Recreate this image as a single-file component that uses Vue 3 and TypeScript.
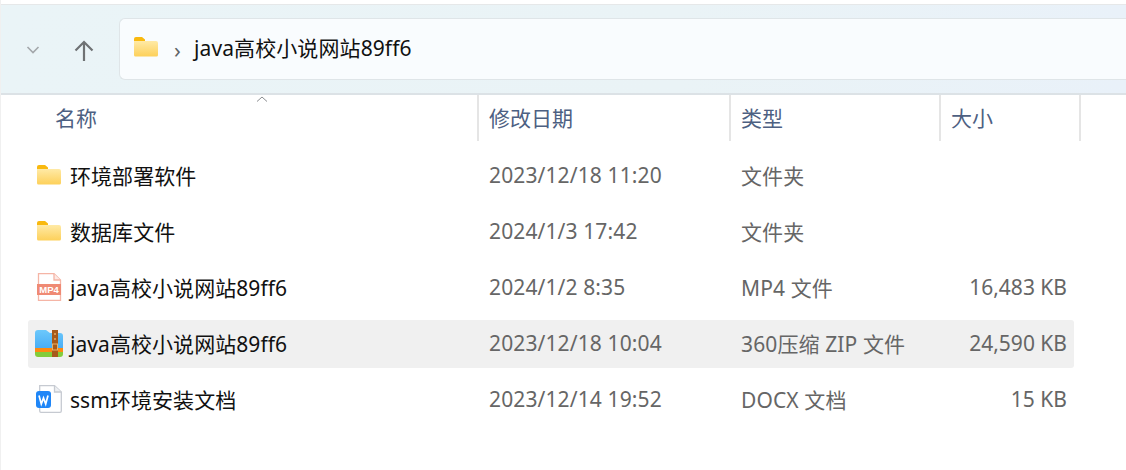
<script setup lang="ts">
interface FileRow {
  name: string;
  date: string;
  type: string;
  size: string;
  icon: 'folder' | 'mp4' | 'zip' | 'docx';
  active?: boolean;
}

const columns = [
  { label: '名称', cls: 'col-name' },
  { label: '修改日期', cls: 'col-date' },
  { label: '类型', cls: 'col-type' },
  { label: '大小', cls: 'col-size' },
];

const rows: FileRow[] = [
  { name: '环境部署软件', date: '2023/12/18 11:20', type: '文件夹', size: '', icon: 'folder' },
  { name: '数据库文件', date: '2024/1/3 17:42', type: '文件夹', size: '', icon: 'folder' },
  { name: 'java高校小说网站89ff6', date: '2024/1/2 8:35', type: 'MP4 文件', size: '16,483 KB', icon: 'mp4' },
  { name: 'java高校小说网站89ff6', date: '2023/12/18 10:04', type: '360压缩 ZIP 文件', size: '24,590 KB', icon: 'zip', active: true },
  { name: 'ssm环境安装文档', date: '2023/12/14 19:52', type: 'DOCX 文档', size: '15 KB', icon: 'docx' },
];
</script>

<template>
  <div class="window">
    <div class="toolbar">
      <svg class="chevron" width="14" height="10" viewBox="0 0 14 10">
        <path d="M1.5 2 L7 7.5 L12.5 2" fill="none" stroke="#a3a7aa" stroke-width="1.6" />
      </svg>
      <svg class="up" width="22" height="24" viewBox="0 0 22 24">
        <path d="M11 22 V3 M2.5 11.5 L11 3 L19.5 11.5" fill="none" stroke="#6f7274" stroke-width="2.2" />
      </svg>
      <div class="address">
        <svg class="addr-folder" width="26" height="22" viewBox="0 0 26 22">
          <defs>
            <linearGradient id="folder-fill" x1="0" y1="0" x2="0" y2="1">
              <stop offset="0" stop-color="#ffeaa6" />
              <stop offset="1" stop-color="#fdd05a" />
            </linearGradient>
            <linearGradient id="zip-fill" x1="0" y1="0" x2="0" y2="1">
              <stop offset="0" stop-color="#6cc8fb" />
              <stop offset="1" stop-color="#4aaef5" />
            </linearGradient>
          </defs>
          <path d="M1 3 a2 2 0 0 1 2-2 h6 l3 2.500 v3 H1 z" fill="#f9b90f" />
          <path d="M1 5 H23 a2 2 0 0 1 2 2 V19 a1.500 1.500 0 0 1-1.500 1.500 H2.500 A1.500 1.500 0 0 1 1 19 z" fill="url(#folder-fill)" />
        </svg>
        <span class="crumb-sep">›</span>
        <span class="crumb">java高校小说网站89ff6</span>
      </div>
    </div>

    <div class="header">
      <svg class="sort" width="12" height="6" viewBox="0 0 12 6">
        <path d="M1 5.500 L6 1 L11 5.500" fill="none" stroke="#8a8d90" stroke-width="1" />
      </svg>
      <div v-for="c in columns" :key="c.label" class="head-cell" :class="c.cls">{{ c.label }}</div>
    </div>

    <div class="list">
      <div v-for="r in rows" :key="r.date" class="row" :class="{ active: r.active }">
        <div class="cell-name">
          <span class="icon">
            <svg v-if="r.icon === 'folder'" width="26" height="22" viewBox="0 0 26 22">
              <path d="M1 3 a2 2 0 0 1 2-2 h6 l3 2.500 v3 H1 z" fill="#f9b90f" />
              <path d="M1 5 H23 a2 2 0 0 1 2 2 V19 a1.500 1.500 0 0 1-1.500 1.500 H2.500 A1.500 1.500 0 0 1 1 19 z" fill="url(#folder-fill)" />
            </svg>
            <svg v-else-if="r.icon === 'mp4'" width="26" height="30" viewBox="0 0 26 30">
              <path d="M2.500 1.700 H18 L24.500 8 V28.300 H2.500 z" fill="#fff" stroke="#f5b5a6" stroke-width="1.300" />
              <path d="M18 1.700 V8 H24.500" fill="#fde9e4" stroke="#f5b5a6" stroke-width="1.300" />
              <rect x="1" y="12" width="24" height="11" fill="#ef8a74" />
              <text x="13" y="21" text-anchor="middle" class="mp4-label">MP4</text>
            </svg>
            <svg v-else-if="r.icon === 'zip'" width="28" height="27" viewBox="0 0 28 27">
              <path d="M0 3 a3 3 0 0 1 3-3 h8 l4 3 h10 a3 3 0 0 1 3 3 V18 H0 z" fill="url(#zip-fill)" />
              <rect x="0" y="18" width="28" height="4" fill="#ff8a10" />
              <path d="M0 22 H28 V24 a3 3 0 0 1-3 3 H3 a3 3 0 0 1-3-3 z" fill="#84cc3a" />
              <rect x="17" y="0" width="6" height="27" fill="#a85a1a" />
              <rect x="19.300" y="3" width="1.400" height="2" fill="#e8b26b" />
              <rect x="19.300" y="8" width="1.400" height="2" fill="#e8b26b" />
              <rect x="17.500" y="14" width="5" height="6" fill="none" stroke="#e8b26b" stroke-width="1" />
            </svg>
            <svg v-else width="26" height="28" viewBox="0 0 26 28">
              <path d="M3.700 .7 H18.500 L25.300 7 V26 a1.300 1.300 0 0 1-1.300 1.300 H5 A1.300 1.300 0 0 1 3.700 26 z" fill="#fff" stroke="#c6cad1" stroke-width="1.300" />
              <path d="M18.500 .7 V7 H25.300" fill="#eef0f3" stroke="#c6cad1" stroke-width="1.300" />
              <rect x="0" y="6" width="15" height="17" rx="3" fill="#1f86f7" />
              <path d="M3 10.500 L5.300 19 L7.500 13 L9.700 19 L12 10.500" fill="none" stroke="#fff" stroke-width="1.700" />
            </svg>
          </span>
          <span class="name">{{ r.name }}</span>
        </div>
        <div class="cell-date">{{ r.date }}</div>
        <div class="cell-type">{{ r.type }}</div>
        <div class="cell-size">{{ r.size }}</div>
      </div>
    </div>
  </div>
</template>

<style>
html,
body {
  margin: 0;
  background: #fff;
}
</style>

<style scoped>
.window {
  width: 1126px;
  height: 470px;
  overflow: hidden;
  background: #fff;
  font-family: "Noto Sans", "Noto Sans CJK SC", sans-serif;
  font-size: 21px;
  box-sizing: border-box;
  padding-top: 4px;
  border-left: 1px solid #f0f0f0;
}

.toolbar {
  height: 91px;
  box-sizing: border-box;
  display: flex;
  align-items: center;
  padding: 0 0 1px 25px;
  background: linear-gradient(90deg, #eaf4f7 0%, #eaf3f6 60%, #e9f1f9 100%);
  border-top: 1px solid #e6e8e9;
  border-bottom: 2px solid #dce2e6;
}

.chevron {
  margin-top: 2px;
}

.up {
  margin-left: 33px;
  margin-top: 4px;
}

.address {
  margin-left: 24px;
  flex: 1;
  height: 62px;
  box-sizing: border-box;
  display: flex;
  align-items: center;
  padding-left: 13px;
  background: #f9fcfe;
  border: 1px solid #dfe5e8;
  border-right: none;
  border-radius: 6px 0 0 6px;
}

.addr-folder {
  margin-bottom: 4px;
}

.crumb-sep {
  margin-left: 15px;
  width: 20px;
  color: #5f6366;
  font-size: 22px;
  line-height: 1;
}

.crumb {
  color: #111;
  white-space: nowrap;
  letter-spacing: 0.1px;
  margin-bottom: 4px;
}

.header {
  position: relative;
  display: flex;
  height: 46px;
  padding-left: 54px;
  color: #4d6082;
  line-height: 46px;
}

.sort {
  position: absolute;
  left: 255px;
  top: 1px;
}

.head-cell {
  box-sizing: border-box;
  padding-left: 10px;
  border-right: 2px solid #e5e5e5;
}

.head-cell.col-name {
  width: 424px;
  padding-left: 0;
}

.col-date {
  width: 252px;
}

.col-type {
  width: 210px;
}

.col-size {
  width: 140px;
}

.list {
  display: flex;
  flex-direction: column;
  gap: 8px;
  margin: 11px 52px 0 27px;
}

.row {
  display: flex;
  align-items: center;
  height: 48px;
  box-sizing: border-box;
  padding-bottom: 2px;
  border-radius: 3px;
  color: #666;
  white-space: nowrap;
  letter-spacing: 0.12px;
}

.row.active {
  background: #f0f0f0;
}

.cell-name {
  display: flex;
  align-items: center;
  width: 450px;
  color: #111;
  letter-spacing: 0.06px;
}

.icon {
  display: flex;
  justify-content: center;
  width: 42px;
}

.cell-date {
  width: 252px;
  padding-left: 11px;
  box-sizing: border-box;
}

.cell-type {
  width: 230px;
  padding-left: 11px;
  box-sizing: border-box;
}

.cell-size {
  flex: 1;
  text-align: right;
  padding-right: 7px;
  letter-spacing: 0;
}

.mp4-label {
  font-family: "Liberation Sans", sans-serif;
  font-size: 9.500px;
  font-weight: 700;
  letter-spacing: 0;
  fill: #fff;
}
</style>
